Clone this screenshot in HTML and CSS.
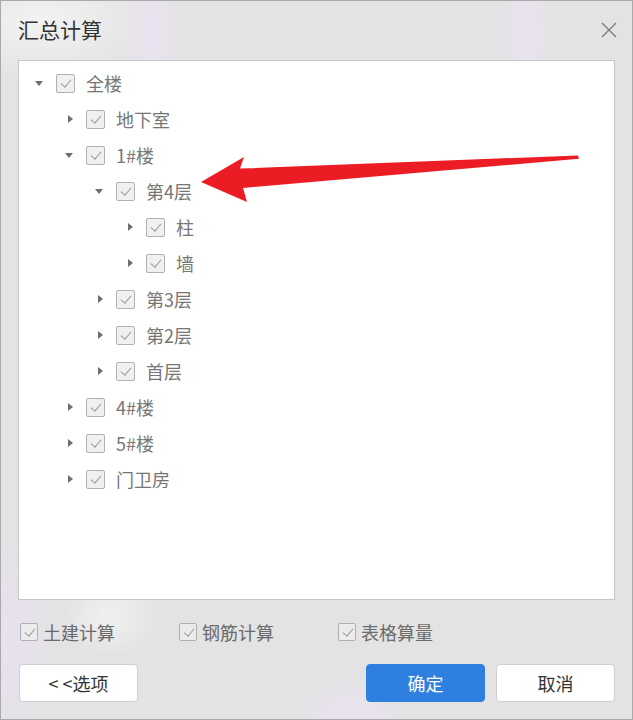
FILE: index.html
```html
<!DOCTYPE html>
<html lang="zh-CN">
<head>
<meta charset="utf-8">
<title>汇总计算</title>
<link rel="stylesheet" href="styles.css">
</head>
<body>
<div class="dialog">
  <div class="titlebar">
    <span class="title">汇总计算</span>
    <button class="close" aria-label="关闭">
      <svg width="16" height="16" viewBox="0 0 16 16"><path d="M1 1 L15 15 M15 1 L1 15" stroke="#7b7b7b" stroke-width="1.4" fill="none"/></svg>
    </button>
  </div>

  <div class="tree">
    <ul class="tree-list">
      <li class="row lv0"><span class="toggle open"></span><span class="cb"></span><span class="label">全楼</span></li>
      <li class="row lv1"><span class="toggle"></span><span class="cb"></span><span class="label">地下室</span></li>
      <li class="row lv1"><span class="toggle open"></span><span class="cb"></span><span class="label">1#楼</span></li>
      <li class="row lv2"><span class="toggle open"></span><span class="cb"></span><span class="label">第4层</span></li>
      <li class="row lv3"><span class="toggle"></span><span class="cb"></span><span class="label">柱</span></li>
      <li class="row lv3"><span class="toggle"></span><span class="cb"></span><span class="label">墙</span></li>
      <li class="row lv2"><span class="toggle"></span><span class="cb"></span><span class="label">第3层</span></li>
      <li class="row lv2"><span class="toggle"></span><span class="cb"></span><span class="label">第2层</span></li>
      <li class="row lv2"><span class="toggle"></span><span class="cb"></span><span class="label">首层</span></li>
      <li class="row lv1"><span class="toggle"></span><span class="cb"></span><span class="label">4#楼</span></li>
      <li class="row lv1"><span class="toggle"></span><span class="cb"></span><span class="label">5#楼</span></li>
      <li class="row lv1"><span class="toggle"></span><span class="cb"></span><span class="label">门卫房</span></li>
    </ul>
  </div>

  <div class="options">
    <label class="opt"><span class="cb small"></span>土建计算</label>
    <label class="opt"><span class="cb small"></span>钢筋计算</label>
    <label class="opt"><span class="cb small"></span>表格算量</label>
  </div>

  <div class="actions">
    <button class="btn">&lt; &lt;选项</button>
    <span class="spacer"></span>
    <button class="btn primary">确定</button>
    <button class="btn">取消</button>
  </div>

  <svg class="annotation" width="633" height="720" viewBox="0 0 633 720">
    <polygon points="201,182 244,157 240,168.5 578,155.5 579,158.8 243,188 247,202" fill="#ec1c24"/>
  </svg>
</div>
</body>
</html>
```

FILE: styles.css
```css
* { box-sizing: border-box; }

html, body {
  margin: 0;
  padding: 0;
  background: #e3e3e3;
}

body {
  font-family: "Noto Sans CJK SC", "Noto Sans", "Liberation Sans", sans-serif;
}

.dialog {
  position: relative;
  width: 633px;
  height: 720px;
  border: 1px solid #a9a9a9;
  display: flex;
  flex-direction: column;
  background:
    radial-gradient(ellipse 30px 90px at 150px 30px, rgba(236, 226, 244, 0.9), rgba(236, 226, 244, 0) 100%),
    radial-gradient(ellipse 30px 80px at 525px 30px, rgba(236, 226, 244, 0.9), rgba(236, 226, 244, 0) 100%),
    radial-gradient(ellipse 120px 60px at 40px 20px, rgba(244, 244, 244, 0.9), rgba(244, 244, 244, 0) 100%),
    radial-gradient(ellipse 60px 120px at 0px 640px, rgba(234, 224, 242, 0.9), rgba(234, 224, 242, 0) 100%),
    radial-gradient(ellipse 60px 40px at 350px 715px, rgba(236, 226, 244, 0.9), rgba(236, 226, 244, 0) 100%),
    radial-gradient(ellipse 50px 40px at 110px 615px, rgba(242, 242, 242, 0.9), rgba(242, 242, 242, 0) 100%),
    #e3e3e3;
}

.titlebar {
  height: 59px;
  display: flex;
  align-items: center;
  padding: 0 14px 0 17px;
}

.title {
  flex: 1;
  font-size: 21px;
  color: #333;
  margin-top: -4px;
}

.close {
  width: 18px;
  height: 18px;
  padding: 0;
  border: 0;
  background: none;
  display: flex;
  align-items: center;
  justify-content: center;
  margin-top: -2px;
}

.tree {
  margin: 0 17px;
  height: 540px;
  background: #fff;
  border: 1px solid #c6c6c6;
}

.tree-list {
  list-style: none;
  margin: 0;
  padding: 4px 0 0 0;
}

.row {
  height: 36px;
  display: flex;
  align-items: center;
  font-size: 18px;
  color: #767676;
}

.lv0 { padding-left: 16px; }
.lv1 { padding-left: 46px; }
.lv2 { padding-left: 76px; }
.lv3 { padding-left: 106px; }

.toggle {
  width: 10px;
  height: 10px;
  margin-right: 11px;
  position: relative;
}

.toggle::before {
  content: "";
  position: absolute;
  left: 3px;
  top: 0.5px;
  border-style: solid;
  border-width: 4.5px 0 4.5px 5px;
  border-color: transparent transparent transparent #6f6f6f;
}

.toggle.open::before {
  left: 0;
  top: 3px;
  border-width: 5px 4.5px 0 4.5px;
  border-color: #6f6f6f transparent transparent transparent;
}

.cb {
  width: 19px;
  height: 19px;
  border: 1px solid #b0b0b0;
  border-radius: 2px;
  background: #f0f0f0;
  margin-right: 11px;
  position: relative;
  flex: none;
}

.cb::after {
  content: "";
  position: absolute;
  left: 5.5px;
  top: 2px;
  width: 5px;
  height: 9px;
  border-right: 1.6px solid #9a9a9a;
  border-bottom: 1.6px solid #9a9a9a;
  transform: rotate(40deg);
}

.label {
  line-height: 1;
  margin-top: -1px;
}

.options {
  display: flex;
  padding: 23px 0 0 19px;
  height: 64px;
}

.opt {
  width: 159px;
  display: flex;
  align-items: center;
  height: 18px;
  font-size: 18px;
  color: #6a6a6a;
}

.opt .cb {
  width: 18px;
  height: 18px;
  background: #ececec;
  margin-right: 5px;
}

.actions {
  display: flex;
  padding: 0 17px 0 18px;
  gap: 11px;
}

.spacer { flex: 1; }

.btn {
  width: 119px;
  height: 38px;
  border: 1px solid #cfcfcf;
  border-radius: 4px;
  background: #fff;
  font-family: inherit;
  font-size: 18px;
  color: #333;
  padding: 0;
}

.btn.primary {
  background: #2e7fe0;
  border-color: #2e7fe0;
  color: #fff;
}

.annotation {
  position: absolute;
  left: -1px;
  top: -1px;
  pointer-events: none;
}
```
